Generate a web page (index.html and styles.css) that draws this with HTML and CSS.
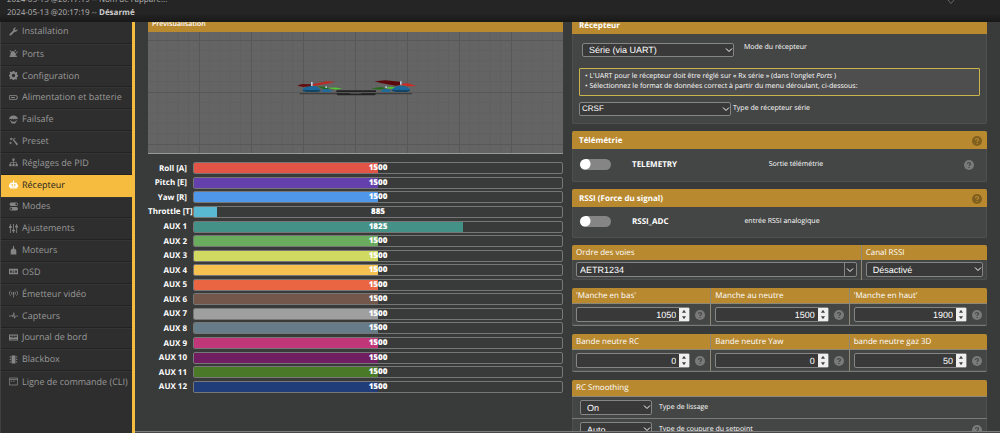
FILE: index.html
```html
<!DOCTYPE html>
<html lang="fr">
<head>
<meta charset="utf-8">
<title>Récepteur</title>
<link rel="stylesheet" href="styles.css">
</head>
<body>
<svg class="defs" aria-hidden="true">
  <symbol id="chev" viewBox="0 0 8 8"><path d="M1 2.500 4 5.500 7 2.500" fill="none" stroke="currentColor" stroke-width="1"/></symbol>
  <symbol id="help" viewBox="0 0 12 12"><circle cx="6" cy="6" r="6" fill="currentColor"/><path d="M4.200 4.800C4.200 2.400 7.900 2.500 7.800 4.600 7.700 5.900 6 5.800 6 7.300M6 8.300v1.400" fill="none" stroke="var(--mark)" stroke-width="1.400"/></symbol>
  <symbol id="spin" viewBox="0 0 10 14"><path d="M5 2 7.200 5H2.800ZM5 12 7.200 9H2.800Z" fill="#444"/></symbol>
</svg>
<header class="log">
  <p>2024-05-13 @20:17:19 -- Nom de l'appare...</p>
  <p>2024-05-13 @20:17:19 -- <strong>Désarmé</strong></p>
  <svg class="log-toggle" viewBox="0 0 8 8"><path d="M1 3 4 6.500 7 3" fill="none" stroke="#666"/></svg>
</header>
<div class="app">
  <nav class="side">
    <ul>
      <li><a href="#"><svg viewBox="0 0 16 16"><path d="M1.300 12.300 7.500 6.200C6.800 3 9.500.3 12.700 1.200L10.300 3.600l.4 1.900 1.900.4L15 3.500c.8 3.200-1.900 5.800-5 5.100L3.800 14.800c-1.800 1.500-4-.8-2.500-2.500Z"/></svg>Installation</a></li>
      <li><a href="#"><svg viewBox="0 0 16 16"><path d="M2 2l3 3 2-2 6 6-2 2 3 1v2H1v-2l2-1C2 9 2 7 4 6L1 3ZM9 4l3-3 1 1-3 3ZM12 7l3-3 1 1-3 3Z"/></svg>Ports</a></li>
      <li><a href="#"><svg viewBox="0 0 16 16"><path fill-rule="evenodd" d="M6.500 0h3l.5 2.200 1.200.5L13.200 1.500l1.900 2-1.200 2 .4 1L16 7v3l-2 .5-.5 1.100 1.200 2-2 1.900-2-1.200-1.200.5L9.500 16h-3L6 14.300l-1.200-.5-2 1.200-1.900-2 1.200-2-.5-1L0 9.500v-3L1.700 6l.5-1.200-1.200-2 2-1.900 2 1.200L6 1.700ZM8 5a3 3 0 1 0 0 6 3 3 0 0 0 0-6Z"/></svg>Configuration</a></li>
      <li><a href="#"><svg viewBox="0 0 16 16"><path d="M1 4.500h12.500v2H15v3h-1.500v2H1Z" fill="none" stroke="currentColor" stroke-width="1.500"/><path d="M3.500 7h7v2h-7Z"/></svg>Alimentation et batterie</a></li>
      <li><a href="#"><svg viewBox="0 0 16 16"><path d="M0 8C0-1.500 16-1.500 16 8c-1-1.600-3-1.600-4 0-1-1.600-2.500-1.600-4 0-1.500-1.600-3-1.600-4 0C3 6.500 1 6.500 0 8ZM1 8.500 6 12h4l5-3.500-4 6.500H5Z"/></svg>Failsafe</a></li>
      <li><a href="#"><svg viewBox="0 0 16 16"><path d="M6 4.500 7.500 3 16 12.500 14 15ZM4 0l.6 2.400L7 2 5 4l1 2-2-1-2 1 .6-2L1 2.400l2.300-.2ZM10 1l.6 1.400L12 3l-1.400.6L10 5l-.6-1.400L8 3l1.400-.6ZM3 8l.7 1.800L6 10l-2 1.200.2 2.300L3 12l-2 1 .6-2L0 9.800l2-.2Z"/></svg>Preset</a></li>
      <li><a href="#"><svg viewBox="0 0 16 16"><path d="M8 4v7M2.500 11V8h11v3" fill="none" stroke="currentColor" stroke-width="1.300"/><path d="M6 1h4v4H6ZM.5 10.500h4v4h-4ZM6 10.500h4v4H6ZM11.500 10.500h4v4h-4Z"/></svg>Réglages de PID</a></li>
      <li class="active"><a href="#" aria-current="page"><svg viewBox="0 0 16 16"><path fill-rule="evenodd" d="M7 1h2v4h5v3h2v5h-2v2H2v-2H0V8h2V5h5ZM4.500 7.500V10H7V7.500ZM9 7.500V10h2.500V7.500ZM5 12v1h6v-1Z"/></svg>Récepteur</a></li>
      <li><a href="#"><svg viewBox="0 0 16 16"><path fill-rule="evenodd" d="M4 1h9a3 3 0 0 1 0 6H4a3 3 0 0 1 0-6Zm9 1.300a1.700 1.700 0 1 0 0 3.400 1.700 1.700 0 0 0 0-3.400ZM4 9h9a3 3 0 0 1 0 6H4a3 3 0 0 1 0-6Zm0 1.300a1.700 1.700 0 1 0 0 3.400 1.700 1.700 0 0 0 0-3.400Z"/></svg>Modes</a></li>
      <li><a href="#"><svg viewBox="0 0 16 16"><path d="M2.500 0v16M8 0v16M13.500 0v16" fill="none" stroke="currentColor" stroke-width="1.500"/><path d="M0 4h5v3H0ZM5.500 10h5v3h-5ZM11 3h5v3h-5Z"/></svg>Ajustements</a></li>
      <li><a href="#"><svg viewBox="0 0 16 16"><path d="M7 0h2v5h2l2 3v7H3V8l2-3h2Z"/></svg>Moteurs</a></li>
      <li><a href="#"><svg viewBox="0 0 16 16"><path fill-rule="evenodd" d="M0 3h16v10H0ZM2 6v4h3V6ZM6.500 6v1.500h3V6ZM6.500 8.500V10h3V8.500ZM11 6v4h3V6Z"/></svg>OSD</a></li>
      <li><a href="#"><svg viewBox="0 0 16 16"><path d="M3 3C0 5 0 10 3 12M13 3c3 2 3 7 0 9M5.500 5c-1.500 1-1.500 4 0 5M10.500 5c1.500 1 1.500 4 0 5M8 7v8" fill="none" stroke="currentColor" stroke-width="1.400"/><circle cx="8" cy="7" r="1.500"/></svg>Émetteur vidéo</a></li>
      <li><a href="#"><svg viewBox="0 0 16 16"><path d="M0 9h4l1.500-2L7 11 8.500 3 10 13l1.500-4H16" fill="none" stroke="currentColor" stroke-width="1.400"/></svg>Capteurs</a></li>
      <li><a href="#"><svg viewBox="0 0 16 16"><path fill-rule="evenodd" d="M0 2.500h16v11H0ZM2 4.500v3h4l1 1h2l1-1h4v-3h-3v1.500H9.500V4.500h-3V6H5V4.500ZM2 10.500v1h12v-1Z"/></svg>Journal de bord</a></li>
      <li><a href="#"><svg viewBox="0 0 16 16"><path d="M4.500 1h7v14h-7ZM2 2h1.500v2.500H2ZM2 6.500h1.500V9H2ZM2 11h1.500v2.500H2ZM12.500 2H14v2.500h-1.500ZM12.500 6.500H14V9h-1.500ZM12.500 11H14v2.500h-1.500ZM0 3h1v1H0ZM0 7.500h1v1H0ZM0 12h1v1H0ZM15 3h1v1h-1ZM15 7.500h1v1h-1ZM15 12h1v1h-1Z"/></svg>Blackbox</a></li>
      <li><a href="#"><svg viewBox="0 0 16 16"><path d="M.8 1.800h14.400v12.400H.8ZM.8 4.500h14.400M3 7.500h2.500M7 7.500h3" fill="none" stroke="currentColor" stroke-width="1.400"/></svg>Ligne de commande (CLI)</a></li>
    </ul>
  </nav>
  <main class="content">
    <div class="scroll">
      <section class="left">
        <div class="preview">
          <h2 class="thin-title">Prévisualisation</h2>
          <div class="scene">
            <svg class="grid-lines" width="100%" height="100%">
              <defs><pattern id="g" x="-1" y="8" width="52" height="52" patternUnits="userSpaceOnUse">
                <path d="M10.400 0v52M20.800 0v52M31.200 0v52M41.600 0v52M0 10.400h52M0 20.800h52M0 31.200h52M0 41.600h52" stroke="#606060" stroke-width="1"/>
                <path d="M.5 0v52M0 .5h52" stroke="#585858" stroke-width="1"/>
              </pattern></defs>
              <rect width="100%" height="100%" fill="url(#g)"/>
            </svg>
            <svg class="drone" viewBox="467 236 360 54">
              <path d="M478 278H815v4H478Z" fill="#3c3c3c"/>
              <path d="M588 270h119v5H588ZM588 279h119l-3 6H591Z" fill="#222"/>
              <path d="M628 277h35v3h-35Z" fill="#555"/>
              <path d="M530 258l30 2 8 5-18 2ZM692 264l34-4 10 5-20 3Z" fill="#256b1d"/>
              <path d="M558 262l28-.5 20 3.500-20 2.500ZM735 264l10-4 20 1-6 5Z" fill="#4dcc2c"/>
              <path d="M544 270l10-4h9l11 4-2 5h-27ZM723 270l10-4h9l10 4-3 5h-25Z" fill="#206b9c"/>
              <path d="M487 266l16-9h24l13 9v6l-10 3h-32l-11-4ZM755 266l15-9h23l16 9v5l-9 4h-33l-12-4Z" fill="#1b669a"/>
              <path d="M487 269h53v3l-10 3h-32l-11-4ZM755 269h54v2l-9 4h-33l-12-4Z" fill="#124563"/>
              <path d="M470 256l14-5 31 1 2 4-27 4Z" fill="#611012"/>
              <path d="M515 252l45-9 24 1-12 4-53 9Z" fill="#bb2b25"/>
              <path d="M703 243l32-3 44 4 5 9-18 3-45-8Z" fill="#5a080b"/>
              <path d="M780 250l22-1 27 8-20 1-28-4Z" fill="#c92c25"/>
              <path d="M512 245h5v12h-5ZM779 243h5v10h-5ZM555 258h5v5h-5ZM735 258h5v5h-5Z" fill="#b9c8dc"/>
            </svg>
          </div>
        </div>
        <div class="bars">
          <div class="bar"><span>Roll [A]</span><div class="track"><i class="c1" style="width:50%"></i><b>1500</b></div></div>
          <div class="bar"><span>Pitch [E]</span><div class="track"><i class="c2" style="width:50%"></i><b>1500</b></div></div>
          <div class="bar"><span>Yaw [R]</span><div class="track"><i class="c3" style="width:50%"></i><b>1500</b></div></div>
          <div class="bar"><span>Throttle [T]</span><div class="track"><i class="c4" style="width:6.200%"></i><b>885</b></div></div>
          <div class="bar"><span>AUX 1</span><div class="track"><i class="c5" style="width:73%"></i><b>1825</b></div></div>
          <div class="bar"><span>AUX 2</span><div class="track"><i class="c6" style="width:50%"></i><b>1500</b></div></div>
          <div class="bar"><span>AUX 3</span><div class="track"><i class="c7" style="width:50%"></i><b>1500</b></div></div>
          <div class="bar"><span>AUX 4</span><div class="track"><i class="c8" style="width:50%"></i><b>1500</b></div></div>
          <div class="bar"><span>AUX 5</span><div class="track"><i class="c9" style="width:50%"></i><b>1500</b></div></div>
          <div class="bar"><span>AUX 6</span><div class="track"><i class="c10" style="width:50%"></i><b>1500</b></div></div>
          <div class="bar"><span>AUX 7</span><div class="track"><i class="c11" style="width:50%"></i><b>1500</b></div></div>
          <div class="bar"><span>AUX 8</span><div class="track"><i class="c12" style="width:50%"></i><b>1500</b></div></div>
          <div class="bar"><span>AUX 9</span><div class="track"><i class="c13" style="width:50%"></i><b>1500</b></div></div>
          <div class="bar"><span>AUX 10</span><div class="track"><i class="c14" style="width:50%"></i><b>1500</b></div></div>
          <div class="bar"><span>AUX 11</span><div class="track"><i class="c15" style="width:50%"></i><b>1500</b></div></div>
          <div class="bar"><span>AUX 12</span><div class="track"><i class="c16" style="width:50%"></i><b>1500</b></div></div>
        </div>
      </section>
      <section class="right">
        <div class="panel">
          <h2>Récepteur</h2>
          <div class="receiver">
            <div class="mode">
              <span class="select"><select id="mode"><option>Série (via UART)</option></select><svg><use href="#chev"/></svg></span>
              <label for="mode">Mode du récepteur</label>
            </div>
            <div class="note">
              <p>• L'UART pour le récepteur doit être réglé sur « Rx série » (dans l'onglet <em>Ports</em> )</p>
              <p>• Sélectionnez le format de données correct à partir du menu déroulant, ci-dessous:</p>
            </div>
            <div class="provider">
              <span class="select small"><select id="provider"><option>CRSF</option></select><svg><use href="#chev"/></svg></span>
              <label for="provider">Type de récepteur série</label>
            </div>
          </div>
        </div>
        <div class="panel">
          <h2>Télémétrie<svg class="help"><use href="#help"/></svg></h2>
          <div class="feature tele">
            <input type="checkbox" id="tele"><label for="tele">TELEMETRY</label><span>Sortie télémétrie</span><svg class="help"><use href="#help"/></svg>
          </div>
        </div>
        <div class="panel">
          <h2>RSSI (Force du signal)<svg class="help"><use href="#help"/></svg></h2>
          <div class="feature">
            <input type="checkbox" id="rssi"><label for="rssi">RSSI_ADC</label><span>entrée RSSI analogique</span>
          </div>
        </div>
        <div class="panel cells map">
          <div class="cell"><label for="order">Ordre des voies</label>
            <div class="field"><div class="combo"><input type="text" id="order" value="AETR1234"><button type="button" aria-label="Ordre des voies"><svg><use href="#chev"/></svg></button></div></div></div>
          <div class="cell"><label for="chan">Canal RSSI</label>
            <div class="field"><span class="select"><select id="chan"><option>Désactivé</option></select><svg><use href="#chev"/></svg></span></div></div>
        </div>
        <div class="panel cells thirds">
          <div class="cell"><label for="n1">'Manche en bas'</label><div class="field"><div class="num"><input type="number" id="n1" value="1050"><svg><use href="#spin"/></svg></div><svg class="help"><use href="#help"/></svg></div></div>
          <div class="cell"><label for="n2">Manche au neutre</label><div class="field"><div class="num"><input type="number" id="n2" value="1500"><svg><use href="#spin"/></svg></div><svg class="help"><use href="#help"/></svg></div></div>
          <div class="cell"><label for="n3">'Manche en haut'</label><div class="field"><div class="num"><input type="number" id="n3" value="1900"><svg><use href="#spin"/></svg></div><svg class="help"><use href="#help"/></svg></div></div>
        </div>
        <div class="panel cells thirds">
          <div class="cell"><label for="n4">Bande neutre RC</label><div class="field"><div class="num"><input type="number" id="n4" value="0"><svg><use href="#spin"/></svg></div><svg class="help"><use href="#help"/></svg></div></div>
          <div class="cell"><label for="n5">Bande neutre Yaw</label><div class="field"><div class="num"><input type="number" id="n5" value="0"><svg><use href="#spin"/></svg></div><svg class="help"><use href="#help"/></svg></div></div>
          <div class="cell"><label for="n6">bande neutre gaz 3D</label><div class="field"><div class="num"><input type="number" id="n6" value="50"><svg><use href="#spin"/></svg></div><svg class="help"><use href="#help"/></svg></div></div>
        </div>
        <div class="panel smoothing">
          <h3>RC Smoothing</h3>
          <div class="row"><span class="select"><select id="s1"><option>On</option></select><svg><use href="#chev"/></svg></span><label for="s1">Type de lissage</label></div>
          <div class="row"><span class="select"><select id="s2"><option>Auto</option></select><svg><use href="#chev"/></svg></span><label for="s2">Type de coupure du setpoint</label><svg class="help"><use href="#help"/></svg></div>
        </div>
      </section>
    </div>
    <div class="foot"></div>
  </main>
</div>
</body>
</html>
```
FILE: styles.css
```css
* { box-sizing: border-box; }
body {
  margin: 0;
  height: 100vh;
  display: flex;
  flex-direction: column;
  overflow: hidden;
  background: #393b3a;
  color: #fff;
  font: 7px/10px "Open Sans", sans-serif;
  text-rendering: geometricPrecision;
}
p, h2, h3, ul { margin: 0; padding: 0; }
input, select, button { margin: 0; padding: 0; border: 0; background: none; color: #fff; font: 9px/12px "Liberation Sans", Arial, sans-serif; outline: 0; border-radius: 0; text-rendering: inherit; }
.defs { position: absolute; width: 0; height: 0; }

.log {
  position: relative;
  z-index: 2;
  flex: none;
  height: 22px;
  padding: 0 7px 3px;
  display: flex;
  flex-direction: column;
  justify-content: flex-end;
  overflow: hidden;
  background: linear-gradient(#252525 60%, #181818);
  color: #b4b4b4;
  font-size: 8px;
  line-height: 13px;
}
.log p { flex: none; }
.log strong { color: #ccc; }
.log-toggle { position: absolute; right: 45px; top: -3px; width: 8px; height: 8px; }

.app { flex: 1; min-height: 0; display: flex; }
.side { flex: none; width: 135px; background: #2e2e2e; border-right: 3px solid #f5bc3f; border-left: 1px solid #404040; overflow: hidden; }
.side ul { list-style: none; height: 371px; display: grid; grid-auto-rows: 1fr; }
.side li { border-top: 1px solid #353535; border-bottom: 1px solid #222; }
.side li:first-child { border-top: 0; }
.side li:last-child { border-bottom: 0; }
.side a { height: 100%; display: flex; align-items: center; gap: 4px; padding: 0 0 2px 8px; color: #999; font-size: 9px; line-height: 12px; text-decoration: none; white-space: nowrap; }
.side svg { width: 9px; height: 9px; fill: currentColor; color: #858585; flex: none; }
.side .active { background: #f5bc3f; border-color: #f5bc3f; }
.side .active a { color: #222; }
.side .active svg { color: #fff; }

.content { flex: 1; min-width: 0; display: flex; flex-direction: column; }
.scroll { flex: 1; min-height: 0; overflow: hidden; display: grid; grid-template-columns: 1fr 1fr; gap: 9px; padding: 0 13px; }
.left, .right { margin-top: -6px; min-width: 0; }
.foot { flex: none; height: 2px; background: #484848; border-top: 1px solid #7c7c7c; }

.thin-title { height: 16px; padding: 1px 4px 0; background: #b8892f; font-size: 7px; line-height: 16px; font-weight: 600; }
.scene { position: relative; height: 122px; padding-top: 47px; display: flex; justify-content: center; background: #646464; border-bottom: 1px solid #999; }
.grid-lines { position: absolute; inset: 0; }
.drone { position: relative; width: 120px; height: 18px; }
.bars { margin-top: 7px; height: 233px; display: grid; grid-auto-rows: 1fr; }
.bar { display: grid; grid-template-columns: 39px 1fr; column-gap: 6px; align-items: center; font-size: 8px; font-weight: 700; line-height: 11px; }
.bar span { text-align: right; white-space: nowrap; }
.track { position: relative; height: 12px; border: 1px solid #777; border-radius: 2px; text-align: center; line-height: 10px; overflow: hidden; }
.track i { position: absolute; left: 0; top: 0; bottom: 0; }
.track b { position: relative; }
.c1 { background: #e15446; } .c2 { background: #6340ac; } .c3 { background: #4f97e8; } .c4 { background: #5ab9d2; }
.c5 { background: #449287; } .c6 { background: #69ac5e; } .c7 { background: #d0da61; } .c8 { background: #f5c252; }
.c9 { background: #ea6541; } .c10 { background: #74574b; } .c11 { background: #9f9f9f; } .c12 { background: #677c89; }
.c13 { background: #c03779; } .c14 { background: #701d62; } .c15 { background: #4a7927; } .c16 { background: #213d79; }

.right { display: flex; flex-direction: column; gap: 7px; }
.panel { flex: none; background: #444645; border-radius: 2px; overflow: hidden; box-shadow: inset 0 0 0 1px #4e504f; }
.panel h2 { height: 18px; padding: 1px 5px 0 7px; display: flex; align-items: center; justify-content: space-between; background: #b8892f; font-size: 8px; line-height: 12px; font-weight: 700; }
.help { flex: none; width: 10px; height: 10px; color: #7a7a7a; --mark: #444645; }
h2 .help { color: #80601f; --mark: #b8892f; }

.select { position: relative; display: block; width: 152px; height: 14px; }
.select select { appearance: none; width: 100%; height: 100%; padding: 0 6px; background: #393939; border: 1px solid #858585; border-radius: 2px; }
.select svg { position: absolute; right: 1px; top: 3px; width: 8px; height: 8px; pointer-events: none; }
.select.small select { padding: 0 2px; font-size: 8px; }

.receiver { padding: 9px 7px 8px; }
.mode { display: flex; gap: 10px; padding-left: 3px; }
.note { margin: 11px 0 6px; padding: 3px 5px; background: #4e4e4e; border: 1px solid #c9b44d; border-radius: 1px; }
.provider { display: flex; align-items: center; gap: 2px; }
.feature { height: 31px; padding: 0 13px 2px 8px; display: grid; grid-template-columns: 52px 1fr 176px 10px; align-items: center; }
.feature.tele { height: 33px; }
.feature label { grid-row: 1; grid-column: 2; font-size: 8px; font-weight: 700; }
.feature span { grid-column: 2 / 4; grid-row: 1; justify-self: center; padding-right: 32px; }
.feature.tele span { padding-right: 4px; }
.feature input { appearance: none; width: 31px; height: 11px; border-radius: 6px; background: radial-gradient(circle at 5px 5px, #fff 5px, #858585 6px); }

.cells { display: grid; }
.map { grid-template-columns: minmax(0, 16fr) minmax(0, 7fr); }
.thirds { grid-template-columns: repeat(3, minmax(0, 1fr)); margin-top: 1px; border-bottom: 1px solid #7a7a7a; }
.cell { min-width: 0; }
.cell + .cell { border-left: 1px solid #8d8878; }
.cell > label { display: block; height: 16px; padding: 0 4px; background: #b8892f; font-size: 8px; line-height: 16px; white-space: nowrap; }
.map .cell > label { height: 15px; }
.thirds .cell > label { border-bottom: 1px solid #8d8878; }
.field { display: flex; align-items: center; gap: 5px; padding: 3px 5px 3px 4px; }
.map .field { padding: 2px 4px 3px; }
.map .select { width: 100%; height: 15px; }
.combo, .num { flex: 1; min-width: 0; height: 15px; display: flex; background: #393939; border: 1px solid #858585; border-radius: 2px; }
.combo input { flex: 1; min-width: 0; padding-left: 3px; }
.combo button { width: 12px; border-left: 1px solid #858585; display: flex; align-items: center; justify-content: center; }
.combo svg { width: 8px; height: 8px; }
.num input { flex: 1; min-width: 0; appearance: textfield; text-align: right; padding-right: 3px; }
.num input::-webkit-inner-spin-button { appearance: none; margin: 0; }
.num svg { flex: none; width: 10px; height: 13px; background: #efefef; }

.smoothing { margin-top: 1px; }
.smoothing h3 { height: 17px; padding: 0 4px; background: #b8892f; border-bottom: 1px solid #8d8878; font-size: 8px; font-weight: 400; line-height: 16px; }
.row { display: flex; align-items: center; gap: 7px; height: 22px; padding: 0 5px 0 8px; border-bottom: 1px solid #7a7a7a; }
.row .select { width: 72px; height: 15px; }
.row .help { margin-left: auto; }
```
